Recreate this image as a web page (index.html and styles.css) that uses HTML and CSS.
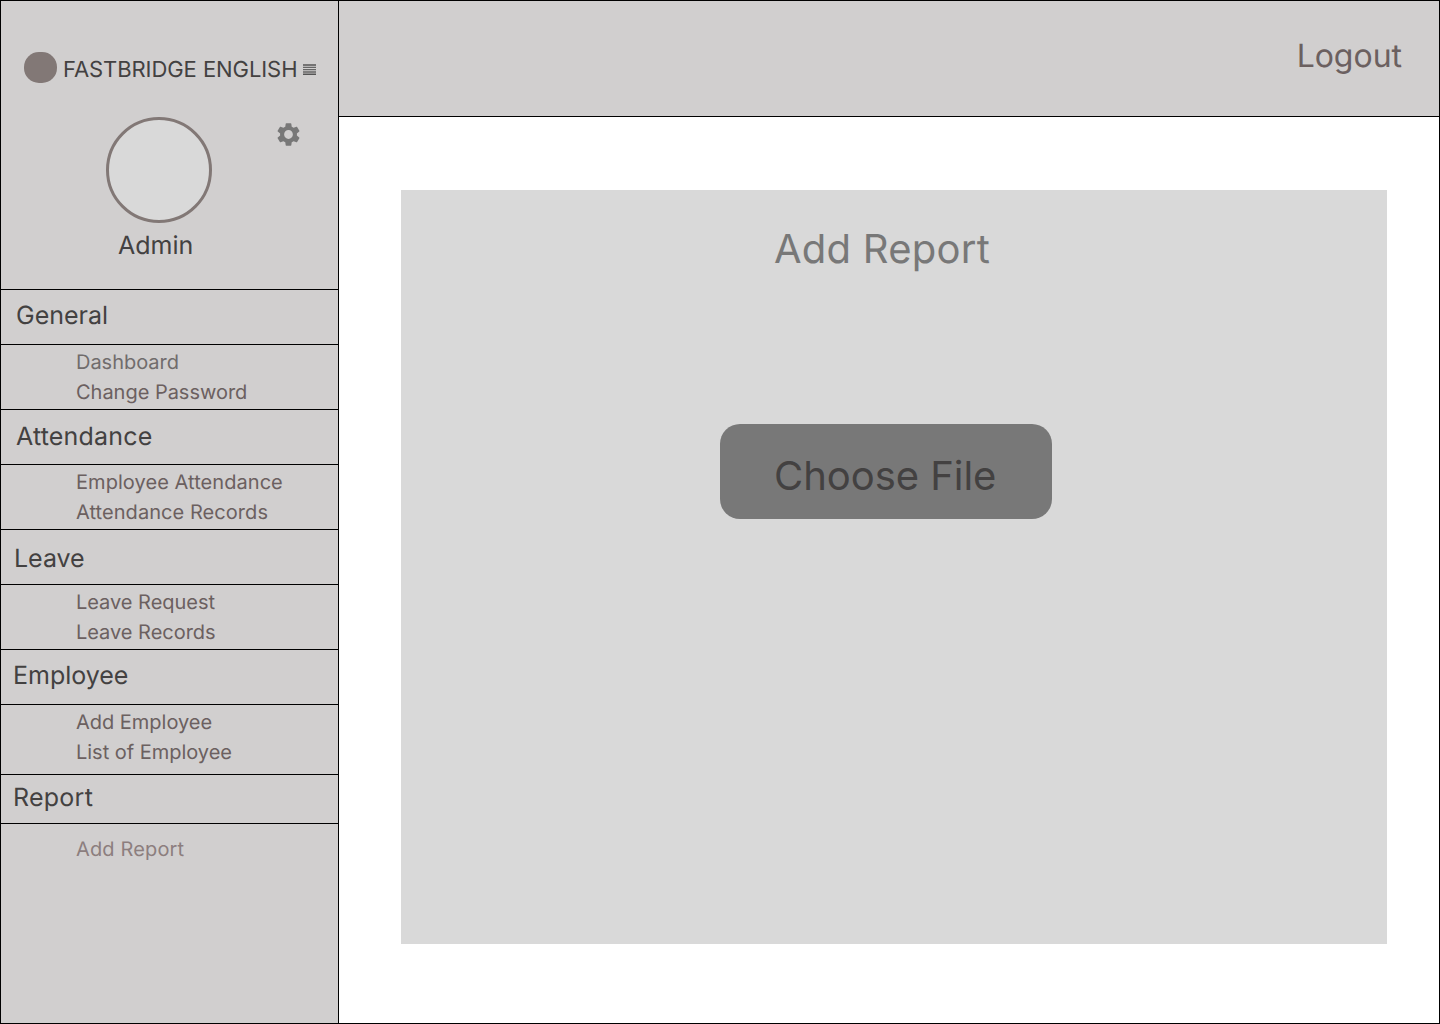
FILE: index.html
```html
<!DOCTYPE html>
<html lang="en">
<head>
<meta charset="utf-8">
<title>Add Report</title>
<link rel="stylesheet" href="styles.css">
</head>
<body>
<div class="app">
  <aside class="sidebar">
    <div class="profile">
      <div class="brand">
        <span class="logo"></span>
        <span class="brand-name">FASTBRIDGE ENGLISH</span>
        <svg class="menu-icon" viewBox="0 0 13 11"><path d="M0 1h13M0 10.3h13" stroke="#555" stroke-width="1.5"/><path d="M0 3.3h13M0 5.7h13M0 8h13" stroke="#666" stroke-width="1.3"/></svg>
      </div>
      <div class="user">
        <div class="avatar"></div>
        <svg class="gear" viewBox="0 0 24 24"><path fill="#787878" d="M19.43 12.98c.04-.32.07-.64.07-.98s-.03-.66-.07-.98l2.11-1.65c.19-.15.24-.42.12-.64l-2-3.46c-.12-.22-.39-.3-.61-.22l-2.49 1c-.52-.4-1.08-.73-1.69-.98l-.38-2.65C14.46 2.18 14.25 2 14 2h-4c-.25 0-.46.18-.49.42l-.38 2.65c-.61.25-1.17.59-1.69.98l-2.49-1c-.23-.09-.49 0-.61.22l-2 3.46c-.13.22-.07.49.12.64l2.11 1.65c-.04.32-.07.65-.07.98s.03.66.07.98l-2.11 1.65c-.19.15-.24.42-.12.64l2 3.46c.12.22.39.3.61.22l2.49-1c.52.4 1.08.73 1.69.98l.38 2.65c.03.24.24.42.49.42h4c.25 0 .46-.18.49-.42l.38-2.65c.61-.25 1.17-.59 1.69-.98l2.49 1c.23.09.49 0 .61-.22l2-3.46c.12-.22.07-.49-.12-.64l-2.11-1.65zM12 15.9c-2.15 0-3.9-1.75-3.9-3.9s1.75-3.9 3.9-3.9 3.9 1.75 3.9 3.9-1.75 3.9-3.9 3.9z"/></svg>
      </div>
      <div class="user-name">Admin</div>
    </div>
    <nav>
      <h2 class="heading general">General</h2>
      <div class="links"><a class="muted">Dashboard</a><a>Change Password</a></div>
      <h2 class="heading attendance">Attendance</h2>
      <div class="links wide"><a>Employee Attendance</a><a>Attendance Records</a></div>
      <h2 class="heading leave">Leave</h2>
      <div class="links"><a>Leave Request</a><a>Leave Records</a></div>
      <h2 class="heading employee">Employee</h2>
      <div class="links tall"><a>Add Employee</a><a>List of Employee</a></div>
      <h2 class="heading report">Report</h2>
      <div class="links current"><a>Add Report</a></div>
    </nav>
  </aside>
  <div class="content">
    <header class="topbar"><a class="logout">Logout</a></header>
    <main class="main">
      <section class="panel">
        <h1 class="title">Add Report</h1>
        <button class="choose">Choose File</button>
      </section>
    </main>
  </div>
</div>
</body>
</html>
```
FILE: styles.css
```css
* { box-sizing: border-box; }
body { margin: 0; font-family: Inter, sans-serif; font-weight: 380; letter-spacing: -0.02px; text-rendering: geometricPrecision; }
h1, h2 { margin: 0; font-weight: inherit; }
.app { display: flex; width: 1440px; height: 1024px; border: 1px solid #000; background: #fff; overflow: hidden; }
.sidebar { width: 338px; flex: none; background: #d1cfcf; border-right: 1px solid #000; }
.profile { height: 288px; padding-top: 51px; }
.brand { display: flex; align-items: center; height: 31px; padding-left: 23px; }
.logo { width: 33px; height: 31px; border-radius: 15px; background: #827876; }
.brand-name { margin-left: 6px; width: 240px; padding-top: 5px; font-size: 22px; line-height: 28px; letter-spacing: -0.07px; color: #434141; white-space: nowrap; }
.menu-icon { width: 13px; height: 11px; margin-top: 4px; }
.user { display: flex; padding: 34px 0 0 105px; }
.avatar { width: 106px; height: 106px; border: 3px solid #827876; border-radius: 50%; background: #d9d9d9; }
.gear { width: 27px; height: 27px; margin: 4px 0 0 63px; }
.user-name { padding-left: 117px; font-size: 25px; line-height: 30px; margin-top: 8px; color: #434141; }
.heading { height: 55px; border-top: 1px solid #000; font-size: 25px; line-height: 30px; padding: 11px 0 0 15px; color: #434141; }
.attendance { padding-top: 12px; letter-spacing: 0.18px; }
.leave { padding: 14px 0 0 13px; }
.employee { padding-left: 12px; }
.report { height: 49px; padding: 8px 0 0 12px; letter-spacing: 0.25px; }
.links { height: 65px; border-top: 1px solid #000; padding: 2px 0 0 75px; font-size: 20px; line-height: 30px; color: #6b6060; }
.links a { display: block; }
.links .muted { color: #706c6c; }
.wide { letter-spacing: 0.06px; }
.tall { height: 70px; }
.current { padding-top: 10px; color: #8c7e7e; letter-spacing: 0.14px; }
.content { flex: 1; }
.topbar { height: 116px; border-bottom: 1px solid #000; background: #d1cfcf; padding: 35px 37px 0 0; text-align: right; }
.logout { font-size: 32px; line-height: 40px; color: #6b6060; }
.main { padding: 73px 0 0 62px; }
.panel { width: 986px; height: 754px; background: #d9d9d9; padding-top: 34px; }
.title { padding-left: 373px; font-size: 40px; line-height: 50px; letter-spacing: 0.25px; color: #787878; }
.choose { display: block; width: 332px; height: 95px; margin: 150px 0 0 319px; border: 0; border-radius: 20px; background: #787878; padding: 9px 0 0 54px; font: inherit; font-size: 40px; line-height: 48px; letter-spacing: -0.04px; color: #434141; text-align: left; }
```
